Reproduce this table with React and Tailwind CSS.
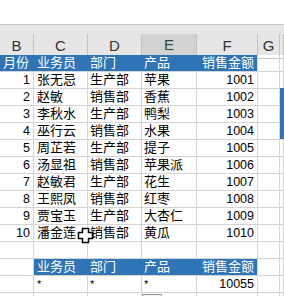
import React from "react";

const rows = [
  [1, "张无忌", "生产部", "苹果", 1001],
  [2, "赵敏", "销售部", "香蕉", 1002],
  [3, "李秋水", "生产部", "鸭梨", 1003],
  [4, "巫行云", "销售部", "水果", 1004],
  [5, "周芷若", "生产部", "提子", 1005],
  [6, "汤显祖", "销售部", "苹果派", 1006],
  [7, "赵敏君", "生产部", "花生", 1007],
  [8, "王熙凤", "销售部", "红枣", 1008],
  [9, "贾宝玉", "生产部", "大杏仁", 1009],
  [10, "潘金莲", "销售部", "黄瓜", 1010],
];

const grid = "grid grid-cols-[34px_54px_54px_55px_61px_22px_1fr]";
const cell = "h-[17px] border-r border-b border-[#d4d4d4] flex items-center overflow-hidden whitespace-nowrap";
const blue = "h-[17px] border-b border-[#d4d4d4] bg-[#2f75b5] text-white flex items-center overflow-hidden whitespace-nowrap";

function Row({ children }) {
  return <div className={grid}>{children}</div>;
}

function Empty() {
  return <div className={cell} />;
}

function FatCross() {
  return (
    <svg width="17" height="17" viewBox="0 0 17 17" className="absolute left-[77px] top-[227px]">
      <path
        d="M5.5 1.5h6v4h4v6h-4v4h-6v-4h-4v-6h4z"
        fill="#fff"
        stroke="#000"
        strokeWidth="1.5"
        strokeLinejoin="miter"
      />
    </svg>
  );
}

export default function App() {
  return (
    <div
      className="relative w-[284px] h-[296px] overflow-hidden bg-white text-[13px] text-black"
      style={{ fontFamily: '"Liberation Sans", "Noto Sans CJK SC", sans-serif' }}
    >
      {/* formula bar area */}
      <div className="h-[25px] border-b border-[#c6c6c6] bg-white" />

      {/* column letters */}
      <div className="bg-[#e6e6e6] pt-[9px]">
        <div className={`${grid} h-[21px] text-[15px] text-[#333]`}>
          {["B", "C", "D", "E", "F", "G", ""].map((l, i) => (
            <div
              key={i}
              className={`flex items-end justify-center border-r border-[#c0c0c0] ${
                l === "E"
                  ? "bg-[#d2d2d2] border-b-2 border-b-[#217346] text-[#2c4a36]"
                  : "border-b border-b-[#c6c6c6]"
              }`}
            >
              {l}
            </div>
          ))}
        </div>
      </div>

      {/* table header */}
      <Row>
        <div className={`${blue} pl-[3px]`}>月份</div>
        <div className={`${blue} pl-[3px]`}>业务员</div>
        <div className={`${blue} pl-[2px]`}>部门</div>
        <div className={`${blue} pl-[2px]`}>产品</div>
        <div className={`${blue} justify-end pr-[3px] border-r border-r-[#d4d4d4]`}>销售金额</div>
        <Empty />
        <Empty />
      </Row>

      {rows.map(([m, name, dept, prod, amt]) => (
        <Row key={m}>
          <div className={`${cell} justify-end pr-[3px] text-[12.5px]`}>{m}</div>
          <div className={`${cell} pl-[3px]`}>{name}</div>
          <div className={`${cell} pl-[2px]`}>{dept}</div>
          <div className={`${cell} pl-[2px]`}>{prod}</div>
          <div className={`${cell} justify-end pr-[3px] text-[12.5px]`}>{amt}</div>
          <Empty />
          <Empty />
        </Row>
      ))}

      <Row>
        {Array.from({ length: 7 }).map((_, i) => (
          <Empty key={i} />
        ))}
      </Row>

      {/* criteria header */}
      <Row>
        <Empty />
        <div className={`${blue} pl-[3px]`}>业务员</div>
        <div className={`${blue} pl-[2px]`}>部门</div>
        <div className={`${blue} pl-[2px]`}>产品</div>
        <div className={`${blue} justify-end pr-[3px] border-r border-r-[#d4d4d4]`}>销售金额</div>
        <Empty />
        <Empty />
      </Row>

      <Row>
        <Empty />
        <div className={`${cell} pl-[3px] text-[11px]`}>*</div>
        <div className={`${cell} pl-[2px] text-[11px]`}>*</div>
        <div className={`${cell} pl-[2px] text-[11px]`}>*</div>
        <div className={`${cell} justify-end pr-[3px] text-[12.5px]`}>10055</div>
        <Empty />
        <Empty />
      </Row>

      <Row>
        {Array.from({ length: 7 }).map((_, i) => (
          <Empty key={i} />
        ))}
      </Row>

      {/* selection edge in column H */}
      <div className="absolute left-[280px] top-[88px] w-[4px] h-[51px] bg-[#2f75b5]" />

      {/* paste options button peeking in */}
      <div className="absolute left-[142px] top-[294px] w-[20px] h-[6px] border border-[#9a9a9a] bg-[#f3f3f3]" />

      <FatCross />
    </div>
  );
}
